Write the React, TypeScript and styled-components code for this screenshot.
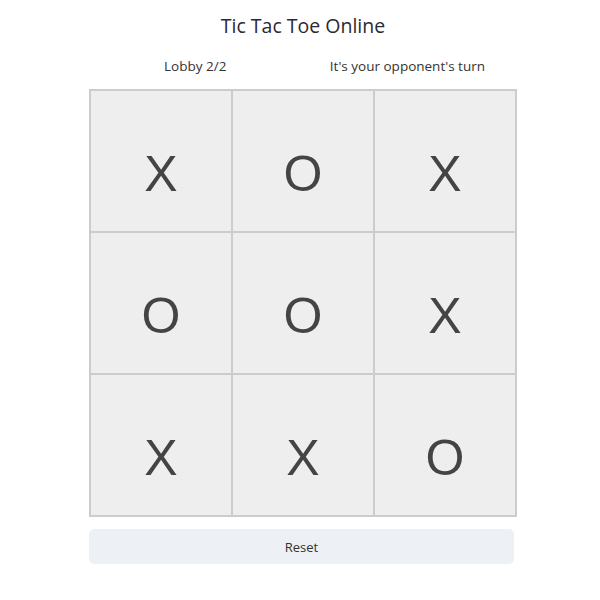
import styled, { createGlobalStyle } from "styled-components";

const board = ["X", "O", "X", "O", "O", "X", "X", "X", "O"];

const App = () => {
  return (
    <Page>
      <GlobalStyle />
      <Title>Tic Tac Toe Online</Title>
      <Status>
        <span>Lobby 2/2</span>
        <span>It's your opponent's turn</span>
      </Status>
      <Board>
        {board.map((mark, i) => (
          <Cell key={i}>{mark}</Cell>
        ))}
      </Board>
      <ResetButton>Reset</ResetButton>
    </Page>
  );
};

const GlobalStyle = createGlobalStyle`
  body {
    margin: 0;
    background: #fff;
    font-family: "Open Sans", "Liberation Sans", sans-serif;
    color: #333;
  }
`;

const Page = styled.div`
  width: 428px;
  margin: 0 auto;
  padding: 12px 0 0 6px;
  display: flex;
  flex-direction: column;
  align-items: stretch;
`;

const Title = styled.h1`
  margin: 0;
  font-size: 19.5px;
  font-weight: 400;
  text-align: center;
  color: #2a2a35;
  line-height: 28px;
`;

const Status = styled.div`
  display: flex;
  justify-content: space-between;
  padding: 0 32px 0 75px;
  margin-top: 16px;
  font-size: 13.5px;
  line-height: 20px;
  color: #333;
`;

const Board = styled.div`
  margin-top: 13px;
  display: grid;
  grid-template-columns: repeat(3, 142px);
  grid-template-rows: repeat(3, 142px);
  border: 1px solid #ccc;
`;

const Cell = styled.div`
  display: flex;
  align-items: center;
  justify-content: center;
  padding-top: 26px;
  background: #eee;
  border: 1px solid #ccc;
  font-family: "Liberation Sans", Arial, sans-serif;
  font-size: 50px;
  color: #444;
`;

const ResetButton = styled.button`
  margin-top: 12px;
  width: 425px;
  height: 35px;
  border: none;
  border-radius: 5px;
  background: #edf1f5;
  font-family: "Open Sans", "Liberation Sans", sans-serif;
  font-size: 13px;
  color: #333;
  cursor: pointer;
`;

export default App;
